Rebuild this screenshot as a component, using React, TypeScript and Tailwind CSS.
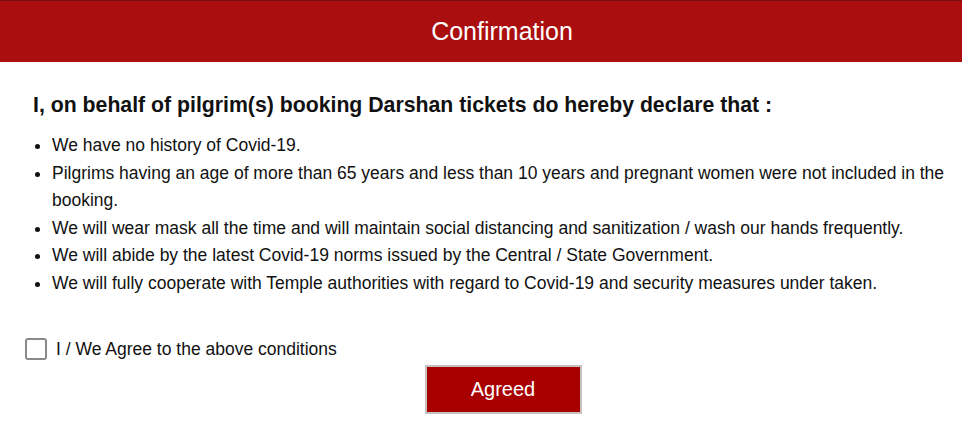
export default function App() {
  const items = [
    "We have no history of Covid-19.",
    "Pilgrims having an age of more than 65 years and less than 10 years and pregnant women were not included in the booking.",
    "We will wear mask all the time and will maintain social distancing and sanitization / wash our hands frequently.",
    "We will abide by the latest Covid-19 norms issued by the Central / State Government.",
    "We will fully cooperate with Temple authorities with regard to Covid-19 and security measures under taken.",
  ];
  return (
    <div className="w-[962px] h-[432px] bg-white overflow-hidden" style={{ fontFamily: '"Liberation Sans", Arial, sans-serif' }}>
      <div className="h-[62px] bg-[#ab0e0e] border-t border-[#7a1010] flex items-center justify-center">
        <span className="text-white text-[25px] pl-[42px]">Confirmation</span>
      </div>
      <div className="pl-[33px] pr-[12px] pt-[30px]">
        <h2 className="font-bold text-[21.25px] text-[#111] leading-[26px]">I, on behalf of pilgrim(s) booking Darshan tickets do hereby declare that :</h2>
        <ul className="mt-[14px] list-disc pl-[19px] text-[17.5px] leading-[27.6px] text-[#111]">
          {items.map((t) => (
            <li key={t}>{t}</li>
          ))}
        </ul>
      </div>
      <div className="pl-[25px] mt-[38px] flex items-center gap-[9px]">
        <span className="w-[22px] h-[22px] border-2 border-[#8a8a8a] rounded-[3px] bg-white" />
        <span className="text-[17.5px] text-[#111]">I / We Agree to the above conditions</span>
      </div>
      <div className="flex justify-center mt-[3px] pl-[44px]">
        <button className="w-[157px] h-[49px] bg-[#a80000] text-white text-[20px] border-2 border-[#c8c0c0]">Agreed</button>
      </div>
    </div>
  );
}
